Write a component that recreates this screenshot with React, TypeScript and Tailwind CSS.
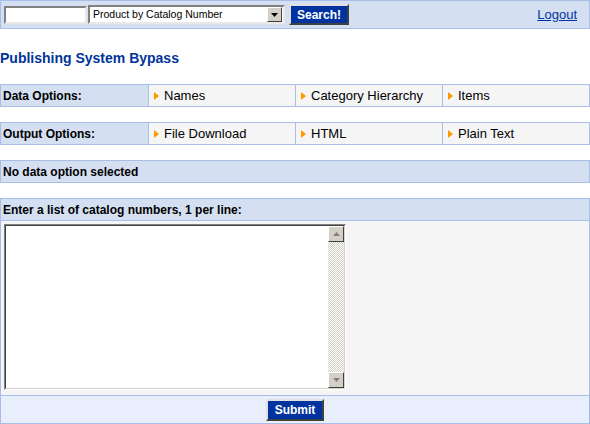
import { useState } from "react";

const dataOptions = ["Names", "Category Hierarchy", "Items"];
const outputOptions = ["File Download", "HTML", "Plain Text"];

// Little orange pointer used in front of each option link
function Arrow() {
	return (
		<svg width="5" height="8" viewBox="0 0 5 8" className="shrink-0">
			<polygon points="0,0 5,4 0,8" fill="#ff9900" />
		</svg>
	);
}

function OptionRow({ label, options }: { label: string; options: string[] }) {
	return (
		<div className="grid grid-cols-4 h-[23px] border border-[#a8bde8]">
			<div className="flex items-center pl-[2px] bg-[#d4dff2] text-[12px] font-bold text-black">
				{label}
			</div>
			{options.map((opt) => (
				<div
					key={opt}
					className="flex items-center gap-[5px] pl-[5px] border-l border-[#a8bde8] bg-[#f5f5f5] text-[13px] text-black"
				>
					<Arrow />
					<span>{opt}</span>
				</div>
			))}
		</div>
	);
}

// Windows-classic style bevelled button for the scrollbar ends
function ScrollButton({ up }: { up?: boolean }) {
	return (
		<div className="w-[16px] h-[16px] bg-[#d4d0c8] border-t border-l border-t-white border-l-white border-b border-r border-b-[#404040] border-r-[#404040] flex items-center justify-center">
			<svg width="7" height="4" viewBox="0 0 7 4">
				<polygon
					points={up ? "3.5,0 7,4 0,4" : "0,0 7,0 3.5,4"}
					fill="#808080"
				/>
			</svg>
		</div>
	);
}

export default function App() {
	const [catalog, setCatalog] = useState("");
	const [query, setQuery] = useState("");

	return (
		<div className="w-[590px] font-['Liberation_Sans',Arial,sans-serif] bg-white">
			{/* Search bar */}
			<div className="h-[29px] flex items-center border border-[#a8bde8] bg-[#d4dff2] pl-[3px] pr-[12px]">
				<input
					value={query}
					onChange={(e) => setQuery(e.target.value)}
					className="w-[83px] h-[18px] bg-white border-2 border-t-[#808080] border-l-[#808080] border-b-[#e8e8e8] border-r-[#e8e8e8] outline-none text-[11px] px-[2px]"
				/>
				<div className="ml-[1px] w-[197px] h-[19px] flex items-center bg-white border-2 border-t-[#808080] border-l-[#808080] border-b-[#e8e8e8] border-r-[#e8e8e8]">
					<span className="flex-1 pl-[3px] text-[10.5px] leading-none text-black">
						Product by Catalog Number
					</span>
					<div className="w-[15px] h-[15px] mr-px bg-[#d4d0c8] border border-t-white border-l-white border-b-[#404040] border-r-[#404040] flex items-center justify-center">
						<svg width="7" height="4" viewBox="0 0 7 4">
							<polygon points="0,0 7,0 3.5,4" fill="#000" />
						</svg>
					</div>
				</div>
				<button
					type="button"
					className="ml-[4px] w-[60px] h-[21px] bg-[#0033a0] text-white text-[12px] font-bold border-2 border-t-[#e0e0e0] border-l-[#e0e0e0] border-b-[#404040] border-r-[#404040] leading-none"
				>
					Search!
				</button>
				<a href="#" className="ml-auto text-[13px] text-[#0033a0] underline">
					Logout
				</a>
			</div>

			{/* Title */}
			<h1 className="pt-[21px] pb-[18px] text-[14px] leading-[16px] font-bold text-[#003399]">
				Publishing System Bypass
			</h1>

			<OptionRow label="Data Options:" options={dataOptions} />
			<div className="h-[15px]" />
			<OptionRow label="Output Options:" options={outputOptions} />
			<div className="h-[15px]" />

			{/* Status */}
			<div className="h-[23px] flex items-center pl-[2px] border border-[#a8bde8] bg-[#d4dff2] text-[12px] font-bold text-black">
				No data option selected
			</div>
			<div className="h-[15px]" />

			{/* Catalog number entry */}
			<div className="border border-[#a8bde8]">
				<div className="h-[22px] flex items-center pl-[2px] border-b border-[#a8bde8] bg-[#d4dff2] text-[12px] font-bold text-black">
					Enter a list of catalog numbers, 1 per line:
				</div>
				<div className="h-[175px] bg-[#f5f5f5] pl-[3px] pt-[3px] border-b border-[#a8bde8]">
					<div className="w-[342px] h-[166px] border border-t-[#808080] border-l-[#808080] border-b-white border-r-white">
						<div className="w-full h-full flex border border-t-[#404040] border-l-[#404040] border-b-[#d4d0c8] border-r-[#d4d0c8] bg-white">
							<textarea
								value={catalog}
								onChange={(e) => setCatalog(e.target.value)}
								className="flex-1 resize-none outline-none overflow-hidden text-[13px] p-[2px] bg-white"
							/>
							<div className="w-[16px] flex flex-col">
								<ScrollButton up />
								<div className="flex-1 bg-[repeating-conic-gradient(#d4d0c8_0%_25%,#ffffff_0%_50%)] bg-size-[2px_2px]" />
								<ScrollButton />
							</div>
						</div>
					</div>
				</div>
				<div className="h-[27px] flex justify-center pt-[3px] bg-[#e8eefc]">
					<button
						type="button"
						className="w-[58px] h-[22px] bg-[#0033a0] text-white text-[12px] font-bold border-2 border-t-[#e0e0e0] border-l-[#e0e0e0] border-b-[#404040] border-r-[#404040] leading-none"
					>
						Submit
					</button>
				</div>
			</div>
		</div>
	);
}
